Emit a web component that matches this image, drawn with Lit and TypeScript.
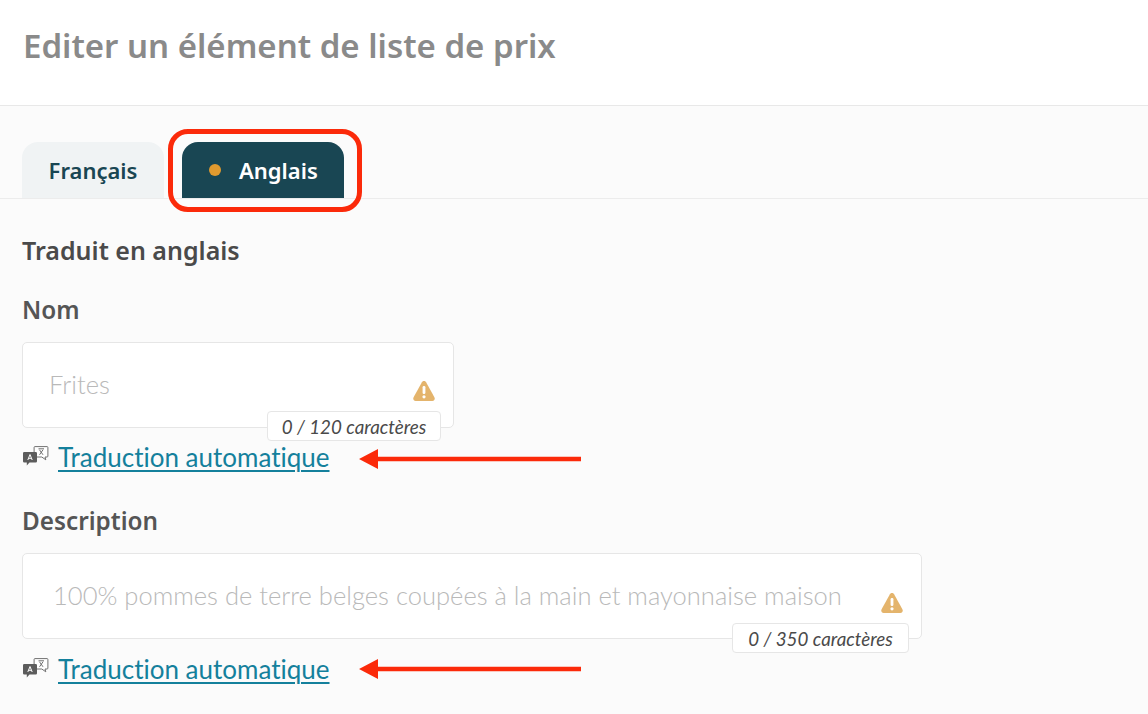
import { LitElement, html, css } from 'lit';
import { customElement } from 'lit/decorators.js';

// little speech bubbles in front of the "Traduction automatique" link
const translateIcon = html`<svg class="trIcon" width="26" height="20" viewBox="0 0 26 20">
  <path d="M12 .6h12a.9.9 0 0 1 .9.9v8.600a.9.9 0 0 1-.9.9h-2l.8 2.800-4-2.800H12a.9.9 0 0 1-.9-.9V1.500a.9.9 0 0 1 .9-.9z" fill="#fff" stroke="#707070" stroke-width="1"/>
  <path d="M15.500 2.800h5.500M16.500 8.800l3.500-5M20 8.800l-3.500-5" fill="none" stroke="#707070" stroke-width="1"/>
  <path d="M1.200 6h11.600a1.200 1.200 0 0 1 1.200 1.200v8.100a1.200 1.200 0 0 1-1.200 1.200H6.500l-2.700 3v-3H1.200A1.200 1.200 0 0 1 0 15.300V7.200A1.200 1.200 0 0 1 1.200 6z" fill="#5c5c5c"/>
  <path d="M4.800 14l2.200-5.500 2.200 5.500M5.600 12.300h2.800" fill="none" stroke="#fff" stroke-width="1"/>
</svg>`;

const warnIcon = html`<svg class="warn" width="22" height="20" viewBox="0 0 22 20">
  <path d="M11 0c.9 0 1.600.5 2.100 1.300l8.300 15c.9 1.700-.1 3.700-2 3.700H2.600c-1.900 0-2.900-2-2-3.700l8.300-15C9.400.5 10.100 0 11 0z" fill="#e4b46c"/>
  <rect x="9.600" y="5" width="2.800" height="8" rx="1.200" fill="#fff"/>
  <circle cx="11" cy="15.800" r="1.600" fill="#fff"/>
</svg>`;

const arrow = html`<svg width="222" height="20" viewBox="0 0 222 20">
  <path d="M0 10L19 0V7.800H222V12.200H19V20z" fill="#fb2a0a"/>
</svg>`;

@customElement('app-root')
export class AppRoot extends LitElement {
  static styles = css`
    :host {
      display: block;
      height: 714px;
      overflow: hidden;
      position: relative;
      background: #fbfbfb;
      font-family: "Lato", "Noto Sans", sans-serif;
      font-variant-ligatures: none;
      color: #4a4a4a;
    }
    .pageHead {
      height: 105px;
      background: #fff;
      border-bottom: 1px solid #e8e8e8;
      padding-left: 23px;
      display: flex;
      align-items: flex-start;
    }
    .pageHead h1 {
      margin: 24px 0 0;
      font-family: "Noto Sans", sans-serif;
      font-size: 33px;
      line-height: 44px;
      font-weight: 600;
      color: #8a8a8a;
    }
    .tabs {
      margin-top: 36px;
      padding-left: 22px;
      height: 56px;
      display: flex;
      gap: 18px;
      border-bottom: 1px solid #ececec;
    }
    .tab {
      border-radius: 16px 16px 0 0;
      font-family: "Noto Sans", sans-serif;
      font-size: 22px;
      font-weight: 600;
      display: flex;
      align-items: center;
      box-sizing: border-box;
    }
    .tab.fr {
      width: 142px;
      justify-content: center;
      background: #f0f3f4;
      color: #194653;
    }
    .tab.en {
      width: 162px;
      padding-left: 27px;
      gap: 18px;
      background: #194653;
      color: #fff;
    }
    .dot {
      width: 12px;
      height: 12px;
      border-radius: 50%;
      background: #e09a2f;
    }
    .body {
      padding: 0 0 0 22px;
    }
    h2 {
      margin: 35px 0 0;
      font-family: "Noto Sans", sans-serif;
      font-size: 25px;
      line-height: 32px;
      font-weight: 600;
      color: #4a4a4a;
    }
    .field {
      display: flex;
      flex-direction: column;
      align-items: flex-start;
    }
    .field.nom {
      margin-top: 28px;
    }
    .field.desc {
      margin-top: 32px;
    }
    label {
      font-family: "Noto Sans", sans-serif;
      font-size: 24.300px;
      line-height: 32px;
      font-weight: 600;
      color: #555;
    }
    .box {
      margin-top: 16px;
      position: relative;
      height: 86px;
      box-sizing: border-box;
      background: #fff;
      border: 1px solid #e6e6e6;
      border-radius: 5px;
      padding-bottom: 2px;
      font-size: 25.560px;
      font-weight: 300;
      color: #b9b9b9;
      display: flex;
      align-items: center;
    }
    .nom .box {
      width: 432px;
      padding-left: 26px;
    }
    .desc .box {
      width: 900px;
      padding-left: 30px;
    }
    .warn {
      position: absolute;
      right: 18px;
      top: 38px;
    }
    .desc .warn {
      top: 39px;
    }
    .count {
      position: absolute;
      top: 68px;
      height: 30px;
      box-sizing: border-box;
      background: #fff;
      border: 1px solid #e6e6e6;
      border-radius: 4px;
      font-size: 18.800px;
      font-style: italic;
      font-weight: 400;
      color: #4a4a4a;
      display: flex;
      align-items: center;
      justify-content: center;
    }
    .desc .count {
      top: 69px;
    }
    .nom .count {
      left: 244px;
      width: 174px;
    }
    .desc .count {
      left: 709px;
      width: 177px;
    }
    .autoRow {
      margin-top: 13px;
      height: 32px;
      display: flex;
      align-items: center;
      gap: 9px;
    }
    .desc .autoRow {
      margin-top: 14px;
    }
    .trIcon {
      display: block;
      margin: -2px 0 0 1px;
    }
    a {
      font-size: 26px;
      line-height: 32px;
      color: #14809c;
      text-decoration: underline;
      text-decoration-thickness: 2px;
      text-underline-offset: 3px;
    }
    .arrow {
      position: absolute;
      left: 359px;
      height: 20px;
    }
    .arrow svg {
      display: block;
    }
    .arrow1 {
      top: 449px;
    }
    .arrow2 {
      top: 659px;
    }
    .redBox {
      position: absolute;
      left: 168px;
      top: 129px;
      width: 194px;
      height: 83px;
      box-sizing: border-box;
      border: 5px solid #fb2a0a;
      border-radius: 20px;
    }
  `;

  renderField(cls: string, name: string, placeholder: string, count: string) {
    return html`
      <div class="field ${cls}">
        <label>${name}</label>
        <div class="box">
          ${placeholder}
          ${warnIcon}
          <div class="count">${count}</div>
        </div>
        <div class="autoRow">
          ${translateIcon}
          <a href="#">Traduction automatique</a>
        </div>
      </div>
    `;
  }

  render() {
    return html`
      <div class="pageHead"><h1>Editer un élément de liste de prix</h1></div>
      <div class="tabs">
        <div class="tab fr">Français</div>
        <div class="tab en"><span class="dot"></span>Anglais</div>
      </div>
      <div class="body">
        <h2>Traduit en anglais</h2>
        ${this.renderField('nom', 'Nom', 'Frites', '0 / 120 caractères')}
        ${this.renderField('desc', 'Description', '100% pommes de terre belges coupées à la main et mayonnaise maison', '0 / 350 caractères')}
      </div>
      <div class="redBox"></div>
      <div class="arrow arrow1">${arrow}</div>
      <div class="arrow arrow2">${arrow}</div>
    `;
  }
}
